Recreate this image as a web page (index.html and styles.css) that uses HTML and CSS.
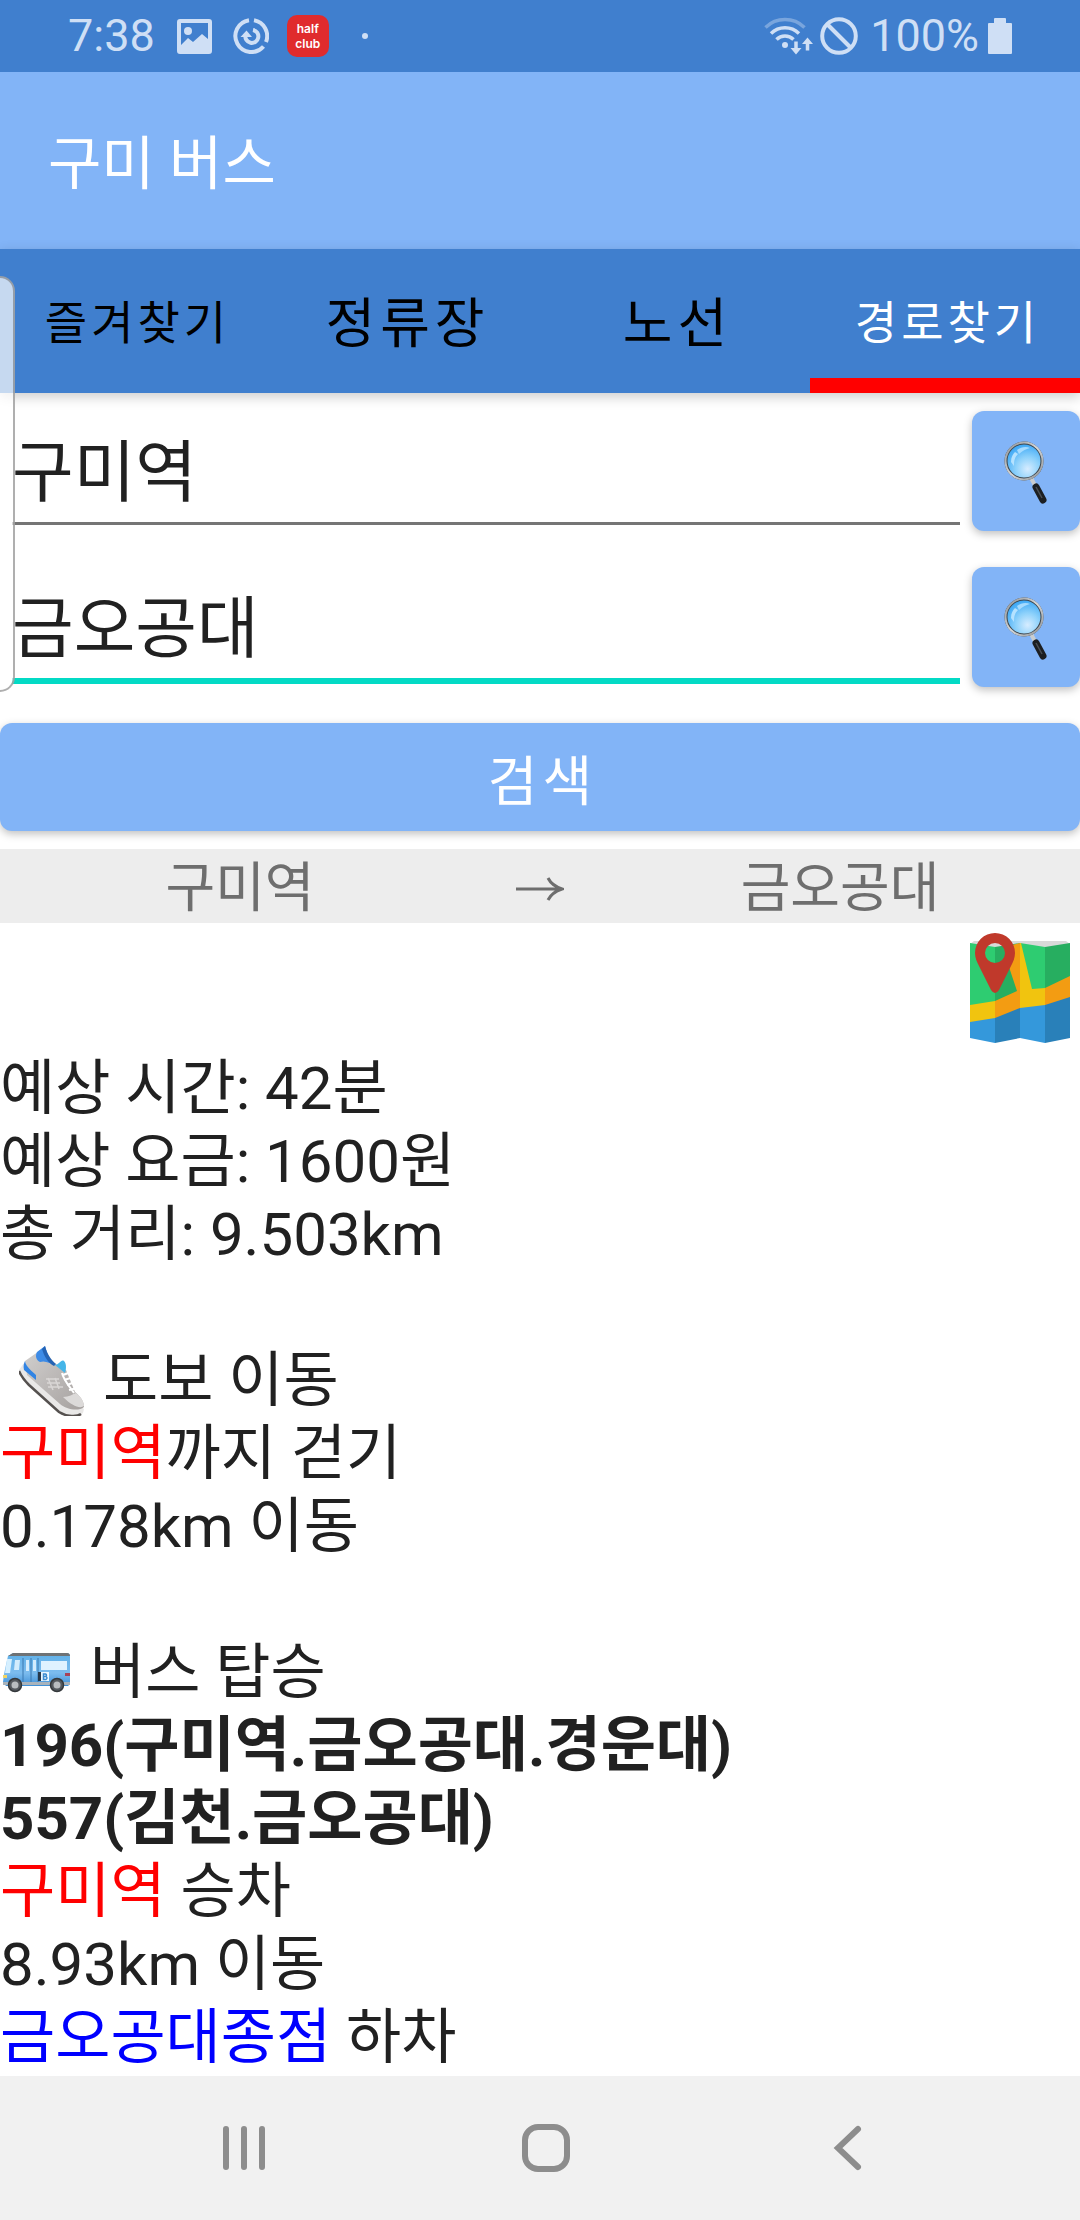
FILE: index.html
```html
<!DOCTYPE html>
<html lang="ko">
<head>
<meta charset="utf-8">
<meta name="viewport" content="width=device-width, initial-scale=1">
<title>구미 버스</title>
<link rel="stylesheet" href="styles.css">
</head>
<body>
<svg class="defs" aria-hidden="true">
  <defs>
    <radialGradient id="lens" cx="0.6" cy="0.72" r="0.72">
      <stop offset="0" stop-color="#d6ecff"/>
      <stop offset="0.45" stop-color="#8fd2fb"/>
      <stop offset="1" stop-color="#36a4f5"/>
    </radialGradient>
    <linearGradient id="rim" x1="0" y1="0" x2="1" y2="1">
      <stop offset="0" stop-color="#8a8f94"/>
      <stop offset="0.5" stop-color="#d5d8da"/>
      <stop offset="1" stop-color="#8a8f94"/>
    </linearGradient>
    <symbol id="magnifier" viewBox="-1 -3 46 66">
      <path d="M27 37l5 9" stroke="#c9cdd0" stroke-width="4"/>
      <path d="M32 46l7 13" stroke="#1c1f22" stroke-width="7" stroke-linecap="round"/>
      <path d="M32 46l6 11" stroke="#4a4f54" stroke-width="1.500"/>
      <circle cx="20" cy="20" r="18" fill="url(#lens)" stroke="#3f454b" stroke-width="3"/>
      <circle cx="20" cy="20" r="18.500" fill="none" stroke="url(#rim)" stroke-width="2"/>
      <path d="M7 21c0-5 2-8 4-10l3 2c-3 3-4 6-4 12z" fill="#b5e2ff"/>
      <path d="M13 9c4-3 9-4 13-2-4 1-8 3-11 6z" fill="#a6dbff"/>
    </symbol>
    <linearGradient id="busBody" x1="0" y1="0" x2="0" y2="1">
      <stop offset="0" stop-color="#5fb0e8"/>
      <stop offset="0.6" stop-color="#7cbcee"/>
      <stop offset="1" stop-color="#3f8fd6"/>
    </linearGradient>
    <linearGradient id="shoeBody" x1="0" y1="0" x2="1" y2="1">
      <stop offset="0" stop-color="#d2d0cf"/>
      <stop offset="1" stop-color="#a5a09e"/>
    </linearGradient>
  </defs>
</svg>

<header class="status">
  <div class="status-left">
    <span class="clock">7:38</span>
    <svg class="ic-image" viewBox="0 0 35 35" aria-hidden="true">
      <path fill-rule="evenodd" d="M3 0h29a3 3 0 0 1 3 3v29a3 3 0 0 1-3 3H3a3 3 0 0 1-3-3V3a3 3 0 0 1 3-3zM4 4v22l7-7 5 4 9-8 6 5V4z"/>
      <circle cx="11" cy="12" r="4"/>
    </svg>
    <svg class="ic-sync" viewBox="0 0 36 36" aria-hidden="true">
      <g fill="none" stroke="currentColor" stroke-width="4">
        <path d="M21 2.300A16 16 0 0 1 33 24"/>
        <path d="M30.500 28.500A16 16 0 1 1 16 2.200"/>
        <path d="M20 12A6.500 6.500 0 1 1 12.500 17"/>
      </g>
      <path d="M7.500 19l6-6.500 5.500 6.500z"/>
    </svg>
    <span class="badge-app"><span>half</span><span>club</span></span>
    <span class="dot"></span>
  </div>
  <div class="status-right">
    <svg class="ic-wifi" viewBox="0 0 50 38" aria-hidden="true">
      <g fill="none" stroke="currentColor" stroke-width="3.500">
        <path opacity=".4" d="M1.500 10.500A28 28 0 0 1 40.500 10.500"/>
        <path d="M7 16.500A20 20 0 0 1 35 16.500"/>
        <path d="M12.500 22.500A12 12 0 0 1 29.500 22.500"/>
        <path d="M32 24.500v9M43.500 33.500v-9"/>
      </g>
      <circle cx="21" cy="28" r="3"/>
      <path d="M26.500 31h11l-5.500 6.500zM38 27h11l-5.500-6.500z"/>
    </svg>
    <svg class="ic-ban" viewBox="0 0 38 38" aria-hidden="true">
      <g fill="none" stroke="currentColor" stroke-width="4">
        <circle cx="19" cy="19" r="16.800"/><path d="M7 7l24 24"/>
      </g>
    </svg>
    <span class="battery-level">100%</span>
    <svg class="ic-battery" viewBox="0 0 24 36" aria-hidden="true">
      <path d="M7 0h10a1 1 0 0 1 1 1v4h5a1 1 0 0 1 1 1v29a1 1 0 0 1-1 1H1a1 1 0 0 1-1-1V6a1 1 0 0 1 1-1h5V1a1 1 0 0 1 1-1z"/>
    </svg>
  </div>
</header>

<div class="app-bar"><h1>구미 버스</h1></div>

<nav class="tabs">
  <a class="tab tab-long" href="#favorites">즐겨찾기</a>
  <a class="tab" href="#stops">정류장</a>
  <a class="tab" href="#lines">노선</a>
  <a class="tab tab-long active" href="#route" aria-current="page">경로찾기</a>
</nav>

<main class="route">
  <form class="search" onsubmit="return false">
    <div class="field">
      <input type="text" value="구미역" aria-label="출발지">
      <button class="raised lookup" type="button" aria-label="출발지 검색"><svg viewBox="0 0 46 66" aria-hidden="true"><use href="#magnifier"/></svg></button>
    </div>
    <div class="field current">
      <input type="text" value="금오공대" aria-label="도착지">
      <button class="raised lookup" type="button" aria-label="도착지 검색"><svg viewBox="0 0 46 66" aria-hidden="true"><use href="#magnifier"/></svg></button>
    </div>
    <button class="raised submit" type="submit">검색</button>
  </form>

  <div class="summary">
    <span>구미역</span>
    <svg viewBox="0 0 48 28" aria-hidden="true"><path d="M0 14h46M32 3c3 6 8 9 14 11-6 2-11 5-14 11" fill="none" stroke="currentColor" stroke-width="3"/></svg>
    <span>금오공대</span>
  </div>

  <section class="result">
    <button class="map" type="button" aria-label="지도 보기">
      <svg viewBox="0 0 100 110" aria-hidden="true">
        <path fill="#d9d9d9" d="M4 8h92l4 3-25 8-25-8-25 8-25-8z"/>
        <path fill="#2ecc71" d="M0 10l25 4v60L0 78z"/>
        <path fill="#27ae60" d="M25 14l25-4v60l-25 8z"/>
        <path fill="#2ecc71" d="M50 10l25 4v50l-25 6z"/>
        <path fill="#27ae60" d="M75 14l25-4v40L75 64z"/>
        <path fill="#f39c12" d="M42 12l8-2v66l-25 14V68l22-10-8-24z"/>
        <path fill="#f1c40f" d="M50 10l1 0 11 46 13-1v20l-25 3z"/>
        <path fill="#f1c40f" d="M0 72l25-4v20L0 92z"/>
        <path fill="#f39c12" d="M75 55l25-12v24L75 76z"/>
        <path fill="#3498db" d="M0 89l25-4v25l-25-5z"/>
        <path fill="#2980b9" d="M25 85l25-10v30l-25 5z"/>
        <path fill="#3498db" d="M50 75l25-3v38l-25-5z"/>
        <path fill="#2980b9" d="M75 72l25-8v41l-25 5z"/>
        <path fill="#c0392b" fill-rule="evenodd" d="M25 0a20 20 0 0 1 20 20c0 5-2 9-4 13L29 57q-4 6-8 0L9 33c-2-4-4-8-4-13A20 20 0 0 1 25 0zm0 10a10 10 0 1 0 0 20a10 10 0 1 0 0-20z"/>
      </svg>
    </button>

    <div class="block">
      <p>예상 시간: 42분</p>
      <p>예상 요금: 1600원</p>
      <p>총 거리: 9.503km</p>
    </div>

    <div class="block">
      <h2>
        <svg class="shoe" viewBox="0 0 66 70" aria-hidden="true">
          <path d="M0 24c2 5 6 10 10 14l30 27c8 6 20 6 24 2l1-4-60-46z" fill="#e9e8e7"/>
          <path d="M0 25c2 5 6 10 10 14l30 27c8 5 18 5 22 2" fill="none" stroke="#55514f" stroke-width="2.500"/>
          <path d="M6 15L26 1c3 8 7 15 14 19l7 4 9 22c5 4 9 9 9 15-6 5-18 2-24-3L8 29z" fill="url(#shoeBody)"/>
          <path d="M18 6l8-6c2 7 4 13 10 18-6 0-9-4-15-2-4-2-5-6-3-10z" fill="#3d8be6"/>
          <path d="M26 0c2 8 6 14 11 18l-2 2c-6-3-10-10-12-17z" fill="#2463b4"/>
          <path d="M6 15c1 6 7 10 11 14v5L5 24c-1-4 0-7 1-9z" fill="#3184e4"/>
          <path d="M36 19c4 0 6-6 9-4 3 3 2 9 1 12z" fill="#45b5e8"/>
          <path d="M27 33h13M28 37h13M29 41h15M29 32l5 12M36 32l4 11" fill="none" stroke="#d9d6d5" stroke-width="1.500"/>
          <path d="M44 29l8-3M45 34l10-3M48 39l8-3M50 44l8-2M43 27c2 8 8 14 12 20" fill="none" stroke="#fff" stroke-width="2"/>
          <path d="M44 51c6 0 10-3 13-4 4 3 8 8 8 13-4 3-12 0-21-9z" fill="#dcdad9"/>
        </svg>
        도보 이동
      </h2>
      <p><span class="from">구미역</span>까지 걷기</p>
      <p>0.178km 이동</p>
    </div>

    <div class="block">
      <h2>
        <svg class="bus" viewBox="0 0 69 40" aria-hidden="true">
          <path d="M5 3L10 0h54q3 0 3 4v27l-2 2H3l-3-4 1-8z" fill="url(#busBody)"/>
          <path d="M5 3l5-3h54q3 0 3 3z" fill="#6e7275"/>
          <path d="M4 6h5L7 20H2z" fill="#d5efff"/>
          <path d="M12 7h5l-1 10h-5zM23 7h3v11h-3zM30 7h3v11h-3z" fill="#d3ecfd"/>
          <path d="M38 8h26v9H38z" fill="#dff2ff"/>
          <path d="M20 5v25M28 5v25M35 5v25" stroke="#3a78b0" stroke-width="1"/>
          <path d="M35 19h3v9h-3z" fill="#27384a"/>
          <path d="M38 19h8v9h-8z" fill="#e9f6ff"/>
          <path fill="none" stroke="#3c8bd0" stroke-width="1.500" d="M40.500 21v5.500h2.500q2-1.500 0-3h-2.500h2q2-1.500 0-2.500z"/>
          <path d="M62 20h5v3h-5z" fill="#a84257"/>
          <path d="M0 22h4v3H0z" fill="#f0d465"/>
          <path d="M0 29h67v3H0z" fill="#a9b3bb"/>
          <g fill="#555a5f" stroke="#34383b" stroke-width="1.500">
            <circle cx="12" cy="32" r="6.500"/><circle cx="54" cy="32" r="6.500"/>
          </g>
          <g fill="#b9bdc0"><circle cx="12" cy="32" r="3.500"/><circle cx="54" cy="32" r="3.500"/></g>
        </svg>
        버스 탑승
      </h2>
      <p><strong>196(구미역.금오공대.경운대)</strong></p>
      <p><strong>557(김천.금오공대)</strong></p>
      <p><span class="from">구미역</span> 승차</p>
      <p>8.93km 이동</p>
      <p><span class="to">금오공대종점</span> 하차</p>
    </div>
  </section>
</main>

<footer class="system-nav">
  <button type="button" aria-label="최근 앱"><svg viewBox="0 0 48 48" aria-hidden="true"><path d="M6 5v38M24 5v38M42 5v38"/></svg></button>
  <button type="button" aria-label="홈"><svg viewBox="0 0 48 48" aria-hidden="true"><rect x="3" y="3" width="42" height="42" rx="13"/></svg></button>
  <button type="button" aria-label="뒤로"><svg viewBox="0 0 48 48" aria-hidden="true"><path d="M34 5L14 24l20 19"/></svg></button>
</footer>

<div class="edge-handle" aria-hidden="true"></div>
</body>
</html>
```

FILE: styles.css
```css
* { box-sizing: border-box; }

body {
  margin: 0;
  min-height: 100vh;
  display: flex;
  flex-direction: column;
  position: relative;
  background: #fff;
  color: #212121;
  font-family: Roboto, "Noto Sans CJK KR", sans-serif;
}

h1, h2, p { margin: 0; font-weight: 400; }
button, input { font-family: inherit; border: 0; padding: 0; margin: 0; }
svg { display: block; }
.defs { position: absolute; width: 0; height: 0; }

/* Status bar */
.status {
  height: 72px;
  padding: 0 68px;
  display: flex;
  justify-content: space-between;
  background: #407fce;
  color: #cfdff5;
  font-size: 45px;
  line-height: 72px;
}
.status svg { fill: currentColor; }
.status-left, .status-right { display: flex; align-items: center; }
.ic-image { width: 35px; height: 35px; margin-left: 22px; }
.ic-sync { width: 36px; height: 36px; margin-left: 21px; }
.badge-app {
  width: 42px;
  height: 42px;
  margin-left: 18px;
  border-radius: 10px;
  background: #e02b2d;
  color: #fff;
  display: flex;
  flex-direction: column;
  align-items: center;
  justify-content: center;
  font: 600 12px/15px Inter, sans-serif;
}
.dot { width: 6px; height: 6px; margin-left: 33px; border-radius: 50%; background: currentColor; }
.ic-wifi { width: 50px; height: 38px; }
.ic-ban { width: 38px; height: 38px; margin: 0 12px 0 6px; }
.ic-battery { width: 24px; height: 36px; margin-left: 9px; }

/* Title and tabs */
.app-bar {
  height: 177px;
  padding: 6px 48px 0;
  display: flex;
  align-items: center;
  background: #82b4f7;
  color: #fff;
}
.app-bar h1 { font-size: 58px; line-height: 72px; }

.tabs {
  height: 144px;
  display: grid;
  grid-template-columns: repeat(4, 1fr);
  background: #407fce;
  box-shadow: 0 4px 12px rgba(0, 0, 0, .2);
}
.tab {
  display: flex;
  align-items: center;
  justify-content: center;
  border-bottom: 15px solid transparent;
  padding: 11px 0 0 5px;
  color: #000;
  font-size: 54px;
  letter-spacing: 5px;
  text-decoration: none;
}
.tab-long { font-size: 46px; letter-spacing: 4px; }
.tab.active { color: #fff; border-color: #f00; }

/* Search form */
.route { flex: 1; }
.search {
  display: flex;
  flex-direction: column;
  gap: 36px;
  padding: 18px 0;
}
.field { display: flex; gap: 12px; padding-left: 12px; }
.field input {
  flex: 1;
  min-width: 0;
  height: 114px;
  border-bottom: 3px solid #757575;
  background: none;
  color: inherit;
  font-size: 67px;
  outline: 0;
}
.current input { height: 117px; border-bottom: 6px solid #03dac5; }
.raised {
  background: #82b4f7;
  color: #fff;
  border-radius: 12px;
  box-shadow: 0 3px 8px rgba(0, 0, 0, .25);
}
.lookup {
  width: 108px;
  height: 120px;
  display: flex;
  align-items: center;
  justify-content: center;
}
.lookup svg { width: 46px; height: 66px; }
.submit { height: 108px; padding-left: 5px; font-size: 54px; letter-spacing: 5px; }

/* Origin and destination */
.summary {
  display: grid;
  grid-template-columns: 4fr 1fr 4fr;
  align-items: center;
  justify-items: center;
  padding-top: 6px;
  background: #ededed;
  color: #6e6e6e;
  font-size: 54px;
  line-height: 68px;
}
.summary svg { width: 48px; height: 28px; }

/* Directions */
.map { display: block; margin: 10px 10px 9px auto; background: none; }
.map svg { width: 100px; height: 110px; }
.block { font-size: 60px; line-height: 73px; }
.block + .block { margin-top: 73px; }
.block p, .block h2 { font-size: 60px; min-height: 73px; }
.block h2 { display: flex; align-items: center; height: 73px; }
.block strong { font-weight: 700; }
.shoe { width: 66px; height: 70px; margin: 0 18px 0 19px; }
.bus { width: 69px; height: 40px; margin: 0 18px 0 3px; }
.from { color: #f00; }
.to { color: #00f; }

/* System navigation */
.system-nav {
  height: 144px;
  padding: 0 81px 0 93px;
  display: grid;
  grid-template-columns: repeat(3, 1fr);
  background: #f1f1f1;
}
.system-nav button { background: none; display: flex; align-items: center; justify-content: center; }
.system-nav svg {
  width: 48px;
  height: 48px;
  fill: none;
  stroke: #8d8d8d;
  stroke-width: 6;
  stroke-linecap: round;
}

/* Edge panel handle, floating over the page */
.edge-handle {
  position: absolute;
  left: 0;
  top: 276px;
  width: 15px;
  height: 416px;
  border: 2px solid rgba(110, 110, 110, .55);
  border-left: 0;
  border-radius: 0 15px 15px 0;
  background: rgba(255, 255, 255, .7);
}
```
